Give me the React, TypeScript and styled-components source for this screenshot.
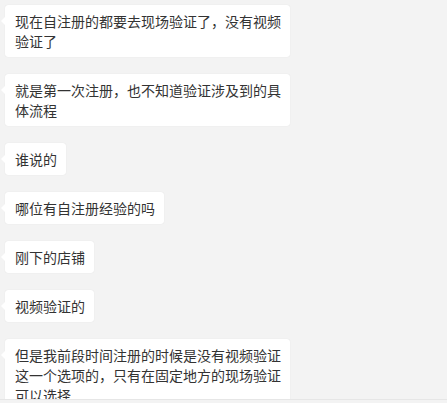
import styled, { createGlobalStyle } from 'styled-components';

const GlobalStyle = createGlobalStyle`
	html, body {
		margin: 0;
		padding: 0;
		background: #f3f3f3;
	}
	body {
		font-family: 'Microsoft YaHei', 'Noto Sans CJK SC', sans-serif;
	}
`;

const ChatPanel = styled.div`
	width: 447px;
	height: 403px;
	background: #f3f3f3;
	overflow: hidden;
`;

const MessageList = styled.div`
	height: 400px;
	box-sizing: border-box;
	padding: 5px 5px 0 5px;
	display: flex;
	flex-direction: column;
	align-items: flex-start;
	gap: 17px;
	overflow: hidden;
	border-bottom: 1px solid #e6e6e6;
`;

const Bubble = styled.div`
	position: relative;
	max-width: 285px;
	box-sizing: border-box;
	padding: 6px 9px 6px 10px;
	background: #ffffff;
	border-radius: 3px;
	box-shadow: 0 0 1px rgba(0, 0, 0, 0.12);
	color: #333333;
	font-size: 14px;
	line-height: 20px;
	word-break: break-all;
	flex-shrink: 0;

	&::before {
		content: '';
		position: absolute;
		left: -4px;
		top: 12px;
		border-top: 4px solid transparent;
		border-bottom: 4px solid transparent;
		border-right: 4px solid #ffffff;
	}
`;

const messages = [
	'现在自注册的都要去现场验证了，没有视频验证了',
	'就是第一次注册，也不知道验证涉及到的具体流程',
	'谁说的',
	'哪位有自注册经验的吗',
	'刚下的店铺',
	'视频验证的',
	'但是我前段时间注册的时候是没有视频验证这一个选项的，只有在固定地方的现场验证可以选择',
];

function App() {
	return (
		<>
			<GlobalStyle />
			<ChatPanel>
				<MessageList>
					{messages.map((text, i) => (
						<Bubble key={i}>{text}</Bubble>
					))}
				</MessageList>
			</ChatPanel>
		</>
	);
}

export default App;
